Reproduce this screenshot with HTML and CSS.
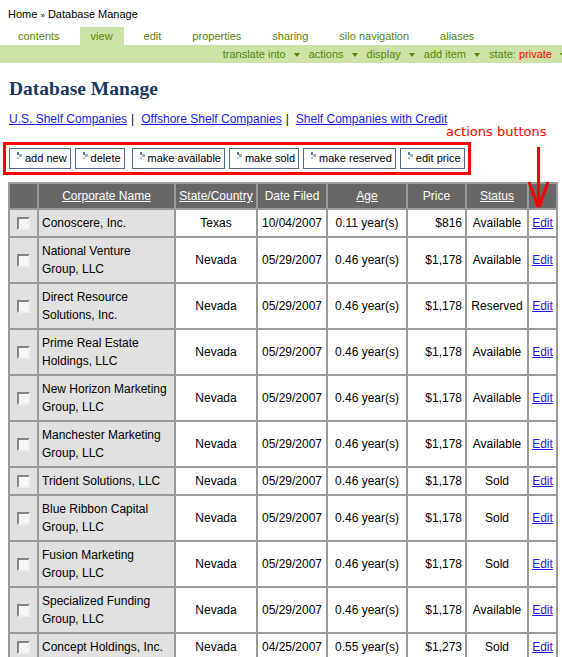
FILE: index.html
```html
<!DOCTYPE html>
<html>
<head>
<meta charset="utf-8">
<title>Database Manage</title>
<link rel="stylesheet" href="styles.css">
</head>
<body>
<div class="breadcrumb">Home <span class="sep">»</span> Database Manage</div>
<ul class="tabs">
  <li>contents</li>
  <li class="selected">view</li>
  <li>edit</li>
  <li>properties</li>
  <li>sharing</li>
  <li>silo navigation</li>
  <li>aliases</li>
</ul>
<div class="actionbar">
  <ul>
    <li>translate into<span class="caret"></span></li>
    <li>actions<span class="caret"></span></li>
    <li>display<span class="caret"></span></li>
    <li>add item<span class="caret"></span></li>
    <li>state:&nbsp;<span class="private">private</span><span class="caret"></span></li>
  </ul>
</div>
<main class="content">
  <h1>Database Manage</h1>
  <p class="categories"><a href="#">U.S. Shelf Companies</a><span class="bar">|</span><a href="#">Offshore Shelf Companies</a><span class="bar">|</span><a href="#">Shelf Companies with Credit</a></p>
  <div class="buttons">
    <button class="btn"><svg class="ico" width="6" height="8" viewBox="0 0 6 8"><rect x="0" y="0" width="2" height="3" fill="#5f7e96"/><rect x="2" y="2" width="3" height="3" fill="#9db1c1"/><rect x="0" y="5" width="2" height="2" fill="#b4c1cb"/></svg>add new</button>
    <button class="btn"><svg class="ico" width="6" height="8" viewBox="0 0 6 8"><rect x="0" y="0" width="2" height="3" fill="#5f7e96"/><rect x="2" y="2" width="3" height="3" fill="#9db1c1"/><rect x="0" y="5" width="2" height="2" fill="#b4c1cb"/></svg>delete</button>
    <button class="btn wide"><svg class="ico" width="6" height="8" viewBox="0 0 6 8"><rect x="0" y="0" width="2" height="3" fill="#5f7e96"/><rect x="2" y="2" width="3" height="3" fill="#9db1c1"/><rect x="0" y="5" width="2" height="2" fill="#b4c1cb"/></svg>make available</button>
    <button class="btn"><svg class="ico" width="6" height="8" viewBox="0 0 6 8"><rect x="0" y="0" width="2" height="3" fill="#5f7e96"/><rect x="2" y="2" width="3" height="3" fill="#9db1c1"/><rect x="0" y="5" width="2" height="2" fill="#b4c1cb"/></svg>make sold</button>
    <button class="btn"><svg class="ico" width="6" height="8" viewBox="0 0 6 8"><rect x="0" y="0" width="2" height="3" fill="#5f7e96"/><rect x="2" y="2" width="3" height="3" fill="#9db1c1"/><rect x="0" y="5" width="2" height="2" fill="#b4c1cb"/></svg>make reserved</button>
    <button class="btn"><svg class="ico" width="6" height="8" viewBox="0 0 6 8"><rect x="0" y="0" width="2" height="3" fill="#5f7e96"/><rect x="2" y="2" width="3" height="3" fill="#9db1c1"/><rect x="0" y="5" width="2" height="2" fill="#b4c1cb"/></svg>edit price</button>
  </div>
  <table class="listing">
    <colgroup>
      <col class="c-check"><col class="c-name"><col class="c-state"><col class="c-date"><col class="c-age"><col class="c-price"><col class="c-status"><col class="c-edit">
    </colgroup>
    <thead>
      <tr>
        <th></th>
        <th><a href="#">Corporate Name</a></th>
        <th><a href="#">State/Country</a></th>
        <th>Date Filed</th>
        <th><a href="#">Age</a></th>
        <th>Price</th>
        <th><a href="#">Status</a></th>
        <th></th>
      </tr>
    </thead>
    <tbody>
      <tr><td class="chk"><input type="checkbox" class="check"></td><td class="name">Conoscere, Inc.</td><td>Texas</td><td>10/04/2007</td><td>0.11 year(s)</td><td class="price">$816</td><td>Available</td><td><a href="#">Edit</a></td></tr>
      <tr><td class="chk"><input type="checkbox" class="check"></td><td class="name">National Venture Group, LLC</td><td>Nevada</td><td>05/29/2007</td><td>0.46 year(s)</td><td class="price">$1,178</td><td>Available</td><td><a href="#">Edit</a></td></tr>
      <tr><td class="chk"><input type="checkbox" class="check"></td><td class="name">Direct Resource Solutions, Inc.</td><td>Nevada</td><td>05/29/2007</td><td>0.46 year(s)</td><td class="price">$1,178</td><td>Reserved</td><td><a href="#">Edit</a></td></tr>
      <tr><td class="chk"><input type="checkbox" class="check"></td><td class="name">Prime Real Estate Holdings, LLC</td><td>Nevada</td><td>05/29/2007</td><td>0.46 year(s)</td><td class="price">$1,178</td><td>Available</td><td><a href="#">Edit</a></td></tr>
      <tr><td class="chk"><input type="checkbox" class="check"></td><td class="name">New Horizon Marketing Group, LLC</td><td>Nevada</td><td>05/29/2007</td><td>0.46 year(s)</td><td class="price">$1,178</td><td>Available</td><td><a href="#">Edit</a></td></tr>
      <tr><td class="chk"><input type="checkbox" class="check"></td><td class="name">Manchester Marketing Group, LLC</td><td>Nevada</td><td>05/29/2007</td><td>0.46 year(s)</td><td class="price">$1,178</td><td>Available</td><td><a href="#">Edit</a></td></tr>
      <tr><td class="chk"><input type="checkbox" class="check"></td><td class="name">Trident Solutions, LLC</td><td>Nevada</td><td>05/29/2007</td><td>0.46 year(s)</td><td class="price">$1,178</td><td>Sold</td><td><a href="#">Edit</a></td></tr>
      <tr><td class="chk"><input type="checkbox" class="check"></td><td class="name">Blue Ribbon Capital Group, LLC</td><td>Nevada</td><td>05/29/2007</td><td>0.46 year(s)</td><td class="price">$1,178</td><td>Sold</td><td><a href="#">Edit</a></td></tr>
      <tr><td class="chk"><input type="checkbox" class="check"></td><td class="name">Fusion Marketing Group, LLC</td><td>Nevada</td><td>05/29/2007</td><td>0.46 year(s)</td><td class="price">$1,178</td><td>Sold</td><td><a href="#">Edit</a></td></tr>
      <tr><td class="chk"><input type="checkbox" class="check"></td><td class="name">Specialized Funding Group, LLC</td><td>Nevada</td><td>05/29/2007</td><td>0.46 year(s)</td><td class="price">$1,178</td><td>Available</td><td><a href="#">Edit</a></td></tr>
      <tr><td class="chk"><input type="checkbox" class="check"></td><td class="name">Concept Holdings, Inc.</td><td>Nevada</td><td>04/25/2007</td><td>0.55 year(s)</td><td class="price">$1,273</td><td>Sold</td><td><a href="#">Edit</a></td></tr>
    </tbody>
  </table>
</main>
<div class="annotation">actions buttons</div>
<svg class="arrow" width="24" height="64" viewBox="0 0 24 64">
  <line x1="12.5" y1="1" x2="12.5" y2="60" stroke="#ff0000" stroke-width="3"/>
  <line x1="3" y1="36" x2="12" y2="61" stroke="#ff0000" stroke-width="3"/>
  <line x1="22" y1="36" x2="13" y2="61" stroke="#ff0000" stroke-width="3"/>
</svg>
</body>
</html>
```

FILE: styles.css
```css
* {
  box-sizing: border-box;
}

html,
body {
  margin: 0;
  padding: 0;
  background: #ffffff;
}

body {
  position: relative;
  width: 562px;
  overflow: hidden;
  font-family: "Liberation Sans", Arial, sans-serif;
  color: #000000;
}

.breadcrumb {
  font-size: 11px;
  line-height: 14px;
  padding: 7px 8px 0;
  margin-bottom: 4px;
}

.breadcrumb .sep {
  font-size: 8px;
}

.tabs {
  display: flex;
  gap: 9px;
  list-style: none;
  margin: 0;
  padding: 0 0 0 7px;
  font-size: 11px;
  line-height: 18px;
}

.tabs li {
  padding: 0 11px;
  color: #578308;
}

.tabs li.selected {
  background: #cde2a7;
}

.actionbar {
  display: flex;
  justify-content: flex-end;
  height: 18px;
  overflow: hidden;
  background: #cde2a7;
}

.actionbar ul {
  display: flex;
  gap: 9px;
  list-style: none;
  margin: 0 -4px 0 0;
  padding: 0;
  font-size: 11px;
  line-height: 18px;
  color: #578308;
  white-space: nowrap;
}

.actionbar li {
  display: flex;
  align-items: center;
}

.actionbar .private {
  color: #ff0000;
}

.caret {
  display: block;
  width: 0;
  height: 0;
  margin-left: 8px;
  margin-top: 1px;
  border-left: 3px solid transparent;
  border-right: 3px solid transparent;
  border-top: 4px solid #578308;
}

.content {
  padding: 0 8px;
}

h1 {
  font-family: "Liberation Serif", "Times New Roman", serif;
  font-size: 19.5px;
  line-height: 24px;
  font-weight: bold;
  color: #1d3660;
  margin: 14px 0 0 1px;
}

.categories {
  font-size: 12px;
  line-height: 15px;
  margin: 11px 0 0 1px;
}

.categories a {
  color: #1c1cee;
}

.categories .bar {
  margin: 0 7px 0 4px;
}

.buttons {
  display: inline-flex;
  gap: 4px;
  margin: 21px 0 0 1px;
  outline: 3px solid #ff0000;
  outline-offset: 3px;
}

.btn {
  display: flex;
  align-items: flex-start;
  height: 21px;
  margin: 0;
  padding: 0 3px 0 7px;
  border: 1px solid #4f6d88;
  background: #ffffff;
  font-family: "Liberation Sans", Arial, sans-serif;
  font-size: 11px;
  line-height: 19px;
  color: #000000;
}

.btn.wide {
  margin-left: 3px;
}

.btn .ico {
  flex: none;
  margin: 3px 2px 0 0;
}

.listing {
  margin-top: 13px;
  width: 548px;
  border-collapse: collapse;
  table-layout: fixed;
  font-size: 12px;
  line-height: 18px;
}

.c-check { width: 29px; }
.c-name { width: 137px; }
.c-state { width: 82px; }
.c-date { width: 70px; }
.c-age { width: 80px; }
.c-price { width: 59px; }
.c-status { width: 62px; }
.c-edit { width: 29px; }

.listing th,
.listing td {
  border: 2px solid #999999;
  text-align: center;
  vertical-align: middle;
}

.listing th {
  padding: 3px 2px;
  background: #666666;
  color: #ffffff;
  font-weight: normal;
}

.listing th a {
  color: #ffffff;
}

.listing td {
  padding: 4px 3px;
  background: #ffffff;
}

.listing td.chk,
.listing td.name {
  background: #e1e1e1;
}

.listing td.name {
  text-align: left;
  padding-right: 6px;
}

.listing td.price {
  text-align: right;
}

.listing td a {
  color: #1c1cee;
}

.check {
  -webkit-appearance: none;
  appearance: none;
  display: block;
  width: 13px;
  height: 13px;
  margin: 0 auto;
  border: 2px solid;
  border-color: #858585 #eeeeee #eeeeee #858585;
  background: #f7f7f7;
}

.annotation {
  position: absolute;
  left: 446px;
  top: 124px;
  font-family: "DejaVu Sans", sans-serif;
  font-size: 13px;
  color: #ff0000;
}

.arrow {
  position: absolute;
  left: 526px;
  top: 146px;
}
```
